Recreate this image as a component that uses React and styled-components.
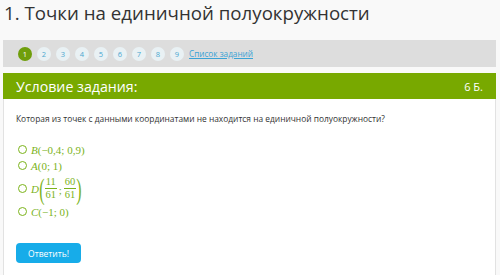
import React from "react";
import styled, { createGlobalStyle } from "styled-components";

const Global = createGlobalStyle`
  body {
    margin: 0;
    background: #f9f9f9;
    font-family: "Open Sans", "Liberation Sans", sans-serif;
  }
`;

const Page = styled.div`
  width: 500px;
  height: 275px;
  padding: 0 4px 0 3px;
  box-sizing: border-box;
  display: flex;
  flex-direction: column;
  overflow: hidden;
`;

const Title = styled.h1`
  margin: 0;
  padding-left: 1px;
  height: 40px;
  font-size: 18.7px;
  line-height: 25px;
  font-weight: 400;
  color: #333;
`;

const Nav = styled.div`
  height: 27px;
  background: #dddddd;
  display: flex;
  align-items: center;
  padding-left: 15px;
  gap: 5px;
`;

const Num = styled.span`
  width: 14px;
  height: 14px;
  border-radius: 50%;
  display: flex;
  align-items: center;
  justify-content: center;
  font-size: 7.5px;
  background: ${p => (p.$active ? "#6f9e0b" : "#e9f1f4")};
  color: ${p => (p.$active ? "#fff" : "#4aa7d0")};
`;

const ListLink = styled.a`
  font-size: 8.2px;
  color: #3aa3d6;
  text-decoration: underline;
`;

const Header = styled.div`
  margin-top: 6px;
  height: 26px;
  background: #78a900;
  color: #fff;
  display: flex;
  align-items: center;
  justify-content: space-between;
  padding: 0 13px;
`;

const HeaderTitle = styled.span`
  font-size: 14.2px;
`;

const Score = styled.span`
  font-size: 11px;
`;

const Body = styled.div`
  flex: 1;
  background: #fff;
  border-left: 1px solid #e2e2e2;
  border-right: 1px solid #e2e2e2;
  padding: 14px 12px 0 12px;
`;

const Question = styled.p`
  margin: 0 0 19px;
  font-size: 8.4px;
  color: #333;
`;

const Options = styled.div`
  display: flex;
  flex-direction: column;
  gap: 3px;
`;

const Option = styled.label`
  display: flex;
  align-items: center;
  gap: 4px;
  min-height: ${p => p.$tall ? "27px" : "13px"};
  font-family: "Liberation Serif", "DejaVu Serif", serif;
  font-size: 11px;
  color: #7bb31a;
  padding-left: 2px;
`;

const Radio = styled.span`
  width: 7px;
  height: 7px;
  border: 1.3px solid #7bb31a;
  border-radius: 50%;
`;

const I = styled.i``;

const Expr = styled.span`
  display: inline-flex;
  align-items: center;
`;

const Paren = styled.span`
  font-size: 29px;
  line-height: 26px;
  display: inline-block;
  transform: scaleX(0.55);
  margin: 0 -2px;
`;

const Frac = styled.span`
  display: inline-flex;
  flex-direction: column;
  align-items: center;
  font-size: 10.5px;
  line-height: 12px;
`;

const Top = styled.span`
  border-bottom: 1px solid #7bb31a;
  padding: 0 1px;
`;

const Semi = styled.span`
  margin: 0 2px;
  padding-top: 3px;
`;

const Button = styled.button`
  margin-top: 25px;
  width: 65px;
  height: 20px;
  border: none;
  border-radius: 4px;
  background: #17ace9;
  color: #fff;
  font-family: "Open Sans", sans-serif;
  font-size: 8.5px;
  padding: 0;
`;

export default function App() {
  return (
    <Page>
      <Global />
      <Title>1. Точки на единичной полуокружности</Title>
      <Nav>
        {[1, 2, 3, 4, 5, 6, 7, 8, 9].map(n => (
          <Num key={n} $active={n === 1}>{n}</Num>
        ))}
        <ListLink>Список заданий</ListLink>
      </Nav>
      <Header>
        <HeaderTitle>Условие задания:</HeaderTitle>
        <Score>6 Б.</Score>
      </Header>
      <Body>
        <Question>Которая из точек с данными координатами не находится на единичной полуокружности?</Question>
        <Options>
          <Option><Radio /><span><I>B</I>(−0,4; 0,9)</span></Option>
          <Option><Radio /><span><I>A</I>(0; 1)</span></Option>
          <Option $tall>
            <Radio />
            <Expr>
              <I>D</I>
              <Paren>(</Paren>
              <Frac><Top>11</Top><span>61</span></Frac>
              <Semi>;</Semi>
              <Frac><Top>60</Top><span>61</span></Frac>
              <Paren>)</Paren>
            </Expr>
          </Option>
          <Option><Radio /><span><I>C</I>(−1; 0)</span></Option>
        </Options>
        <Button>Ответить!</Button>
      </Body>
    </Page>
  );
}
